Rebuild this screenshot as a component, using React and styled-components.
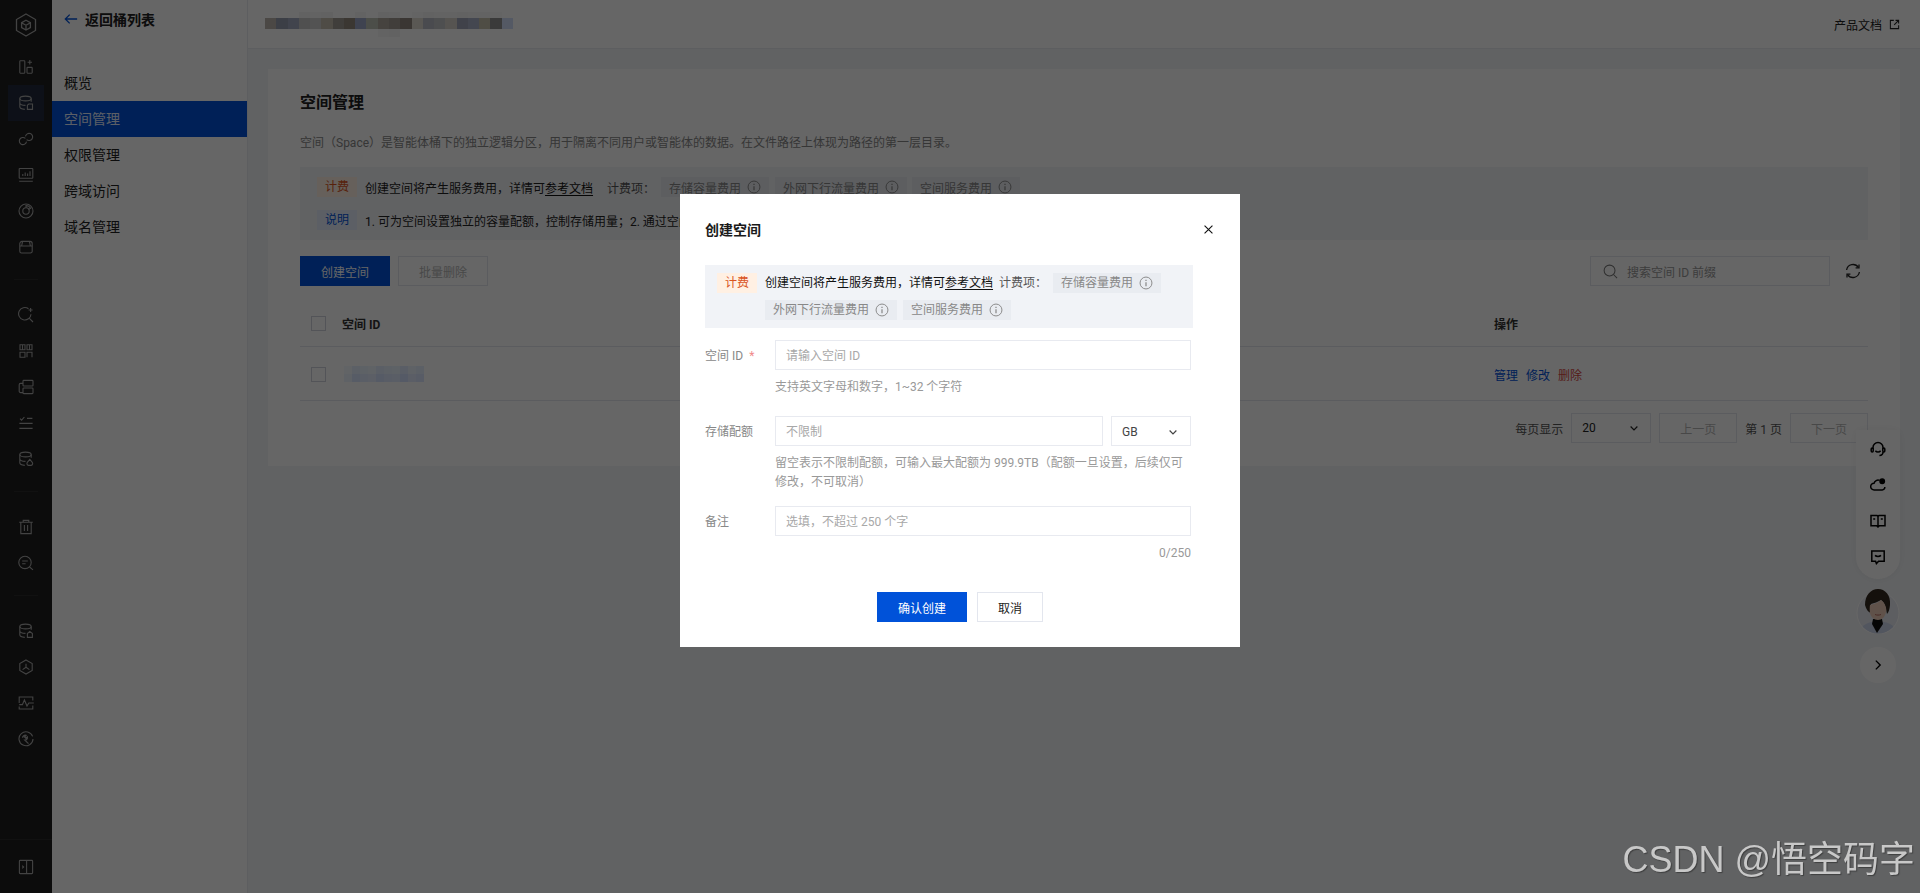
import React from 'react';
import styled, { createGlobalStyle } from 'styled-components';

const GlobalStyle = createGlobalStyle`
  html, body {
    margin: 0;
    height: 100%;
    overflow: hidden;
    background: #f3f4f7;
    font-family: Roboto, "Noto Sans CJK SC", sans-serif;
    font-size: 12px;
    color: #222;
  }
  * {
    box-sizing: border-box;
  }
`;

// the mosaics were sampled through the dark mask, so lift them back up
const undim = (hex) =>
  '#' +
  hex
    .match(/\w\w/g)
    .map((v) => Math.min(255, Math.round(parseInt(v, 16) * 2.5)).toString(16).padStart(2, '0'))
    .join('');

const Page = styled.div`
  display: flex;
  height: 100vh;
  overflow: hidden;
`;

const Rail = styled.nav`
  flex: 0 0 52px;
  display: flex;
  flex-direction: column;
  background: #1e1e1e;
  color: #a8a8a8;
`;

const RailLogo = styled.div`
  height: 49px;
  display: flex;
  align-items: center;
  justify-content: center;
`;

const RailItem = styled.div`
  height: 36px;
  margin: 0 8px;
  display: flex;
  align-items: center;
  justify-content: center;
  background: ${(p) => (p.$active ? '#212a3c' : 'transparent')};
`;

const RailDivider = styled.div`
  height: 1px;
  margin: 14px 14px 17px;
  background: #2c2c2c;
`;

const RailFooter = styled.div`
  margin-top: auto;
  height: 54px;
  border-top: 1px solid #2c2c2c;
  display: flex;
  align-items: center;
  justify-content: center;
`;

const Glyph = styled.svg.attrs((p) => ({ viewBox: p.$box || '0 0 16 16' }))`
  width: ${(p) => p.$size || 16}px;
  height: ${(p) => p.$size || 16}px;
  fill: none;
  stroke: currentColor;
  stroke-width: ${(p) => p.$weight || 1.1};
  flex: none;
`;

const Sidebar = styled.aside`
  flex: 0 0 196px;
  background: #fff;
  border-right: 1px solid #e8eaf0;
`;

const BackLink = styled.div`
  height: 38px;
  padding-left: 12px;
  display: flex;
  align-items: center;
  gap: 7px;
  font-size: 14px;
  font-weight: 700;
  color: #222;
  svg {
    color: #0052d9;
  }
`;

const Menu = styled.div`
  margin-top: 27px;
`;

const MenuItem = styled.div`
  height: 36px;
  line-height: 36px;
  padding-left: 12px;
  font-size: 14px;
  background: ${(p) => (p.$active ? '#0052d9' : 'transparent')};
  color: ${(p) => (p.$active ? '#e4edff' : '#222')};
`;

const Main = styled.main`
  flex: 1;
  min-width: 0;
  display: flex;
  flex-direction: column;
`;

const TopBar = styled.header`
  height: 49px;
  flex: none;
  background: #fff;
  border-bottom: 1px solid #e8eaf0;
  padding: 0 20px 0 17px;
  display: flex;
  align-items: center;
  justify-content: space-between;
`;

const DocLink = styled.div`
  display: flex;
  align-items: center;
  gap: 7px;
  color: #222;
`;

const Content = styled.div`
  flex: 1;
  padding: 20px;
`;

const Card = styled.section`
  height: 397px;
  background: #fff;
  padding: 22px 32px 0;
`;

const Title = styled.h2`
  margin: 0;
  font-size: 16px;
  line-height: 24px;
  font-weight: 700;
  color: #222;
`;

const Intro = styled.p`
  margin: 19px 0 15px;
  line-height: 18px;
  color: #888;
`;

const Notice = styled.div`
  height: 73px;
  background: #f3f4f7;
  padding: 10px 17px;
  display: flex;
  flex-direction: column;
  gap: 13px;
`;

const NoticeRow = styled.div`
  display: flex;
  align-items: center;
  height: 20px;
  white-space: nowrap;
`;

const Tag = styled.span`
  flex: none;
  width: 40px;
  height: 20px;
  line-height: 20px;
  text-align: center;
  margin-right: 8px;
  color: ${(p) => (p.$blue ? '#0052d9' : '#d9541e')};
  background: ${(p) => (p.$blue ? '#e6eefc' : '#fff0e3')};
`;

const DocAnchor = styled.span`
  color: #111;
  text-decoration: underline;
  text-underline-offset: 2px;
`;

const FeeLabel = styled.span`
  margin: 0 6px 0 ${(p) => p.$left}px;
  color: #555;
`;

const Chip = styled.span`
  display: inline-flex;
  align-items: center;
  gap: 6px;
  height: 20px;
  padding: 0 8px;
  color: #888;
  background: #e9ecf1;
  margin-right: ${(p) => (p.$gap ? `${p.$gap}px` : 0)};
`;

const Toolbar = styled.div`
  margin-top: 16px;
  display: flex;
  align-items: center;
  gap: 8px;
`;

const Button = styled.button`
  height: 30px;
  width: ${(p) => p.$width || 90}px;
  padding: 0;
  font: inherit;
  font-size: 12px;
  border: 1px solid ${(p) => (p.$primary ? '#0052d9' : '#e3e6ee')};
  background: ${(p) => (p.$primary ? '#0052d9' : '#fff')};
  color: ${(p) => (p.$primary ? '#fff' : p.$muted ? '#b5b5b5' : '#222')};
`;

const ToolbarEnd = styled.div`
  margin-left: auto;
  padding-right: 7px;
  display: flex;
  align-items: center;
  gap: 15px;
  color: #222;
`;

const SearchBox = styled.div`
  width: 240px;
  height: 30px;
  border: 1px solid #e3e6ee;
  display: flex;
  align-items: center;
  gap: 9px;
  padding-left: 12px;
  color: #999;
  svg {
    color: #777;
  }
`;

const TableRow = styled.div`
  display: flex;
  align-items: center;
  height: ${(p) => (p.$head ? 48 : 54)}px;
  margin-top: ${(p) => (p.$head ? 13 : 0)}px;
  padding: 1px 0 0 11px;
  border-bottom: 1px solid #e3e6ee;
`;

const Checkbox = styled.span`
  width: 15px;
  height: 15px;
  border: 1px solid #cfd3dc;
  background: #fff;
  margin-right: 16px;
  flex: none;
`;

const IdCell = styled.div`
  flex: 1;
  display: flex;
  padding-left: ${(p) => (p.$head ? 0 : 2)}px;
  font-weight: ${(p) => (p.$head ? 700 : 400)};
  color: #333;
`;

const ActionCell = styled.div`
  flex: 0 0 374px;
  display: flex;
  gap: 8px;
  font-weight: ${(p) => (p.$head ? 700 : 400)};
  color: #333;
`;

const ActionLink = styled.span`
  color: ${(p) => (p.$danger ? '#d54941' : '#0052d9')};
`;

const Pager = styled.div`
  margin-top: 12px;
  display: flex;
  justify-content: flex-end;
  align-items: center;
  gap: 8px;
  color: #555;
`;

const PagerSelect = styled.div`
  width: 80px;
  height: 30px;
  border: 1px solid #e3e6ee;
  padding: 0 10px;
  display: flex;
  align-items: center;
  justify-content: space-between;
  color: #222;
`;

const FloatDock = styled.aside`
  position: fixed;
  right: 20px;
  top: 430px;
  display: flex;
  flex-direction: column;
  align-items: center;
`;

const DockPill = styled.div`
  width: 44px;
  height: 149px;
  border-radius: 0 0 22px 22px;
  background: #fff;
  box-shadow: 0 0 12px rgba(0, 0, 0, 0.06);
  padding-top: 1px;
  display: flex;
  flex-direction: column;
  align-items: center;
  color: #000;
`;

const DockIcon = styled.div`
  height: 36px;
  display: flex;
  align-items: center;
  justify-content: center;
`;

const AvatarWrap = styled.div`
  margin-top: 9px;
  height: 46px;
`;

const DockToggle = styled.div`
  margin-top: 13px;
  width: 36px;
  height: 36px;
  border-radius: 50%;
  background: #fff;
  color: #000;
  display: flex;
  align-items: center;
  justify-content: center;
`;

const Mask = styled.div`
  position: fixed;
  inset: 0;
  background: rgba(0, 0, 0, 0.6);
`;

const Dialog = styled.div`
  position: absolute;
  left: 680px;
  top: 194px;
  width: 560px;
  height: 453px;
  background: #fff;
  padding: 26px 49px 25px 25px;
  font-size: 12px;
`;

const DialogTitle = styled.h3`
  margin: 0 0 25px;
  font-size: 14px;
  line-height: 20px;
  font-weight: 700;
  color: #1a1a1a;
`;

const CloseButton = styled.span`
  position: absolute;
  right: 27px;
  top: 31px;
  display: flex;
  color: #111;
`;

const DialogNotice = styled.div`
  height: 63px;
  margin-right: -2px;
  padding: 8px 12px;
  background: #f1f3f7;
  display: flex;
  align-items: flex-start;
`;

const DialogNoticeBody = styled.div`
  flex: 1;
  display: flex;
  flex-wrap: wrap;
  align-items: center;
  row-gap: 7px;
  line-height: 20px;
  color: #111;
`;

const Field = styled.div`
  display: grid;
  grid-template-columns: 70px 1fr;
  margin-top: ${(p) => p.$top}px;
`;

const FieldLabel = styled.label`
  line-height: 32px;
  height: 30px;
  color: #888;
`;

const Required = styled.span`
  margin-left: 6px;
  color: #f08a8a;
`;

const InputRow = styled.div`
  display: flex;
  gap: 8px;
`;

const TextInput = styled.input`
  flex: 1;
  min-width: 0;
  width: 100%;
  height: 30px;
  border: 1px solid #e8eaf0;
  padding: 1px 10px 0;
  font: inherit;
  outline: none;
  &::placeholder {
    color: #a8a8a8;
    opacity: 1;
  }
`;

const UnitSelect = styled.div`
  flex: 0 0 80px;
  height: 30px;
  border: 1px solid #e8eaf0;
  padding: 1px 11px 0 10px;
  display: flex;
  align-items: center;
  justify-content: space-between;
  color: #444;
`;

const Hint = styled.div`
  grid-column: 2;
  margin-top: 8px;
  line-height: 19px;
  color: #999;
`;

const Counter = styled(Hint)`
  text-align: right;
`;

const DialogActions = styled.div`
  margin-top: 29px;
  margin-left: 24px;
  display: flex;
  justify-content: center;
  gap: 10px;
`;

const Watermark = styled.div`
  position: fixed;
  right: 5px;
  top: 837px;
  font-family: "Liberation Sans", "Noto Sans CJK SC", sans-serif;
  font-size: 36px;
  line-height: 46px;
  white-space: nowrap;
  color: #c8c8c8;
  text-shadow: 1px 1px 1px rgba(40, 40, 40, 0.6);
`;

const InfoIcon = () => (
  <Glyph $size={14}>
    <circle cx="8" cy="8" r="6.8" />
    <path d="M8 7v4.8M8 4.2v1.4" strokeWidth="1.4" />
  </Glyph>
);

const Chevron = ({ size = 12 }) => (
  <Glyph $size={size} $weight={1.6}>
    <path d="M3.5 6l4.5 4.5L12.5 6" />
  </Glyph>
);

const DB_BODY = 'M1.8 3.5v8.3c0 1.4 2.4 2.4 5 2.6M13.2 3.5v3.3M1.8 7.8c0 1.4 2.6 2.6 5.7 2.6';

const railGroups = [
  [
    <>
      <rect x="1.8" y="1.8" width="5" height="12.4" rx="0.6" />
      <rect x="9" y="8.4" width="5.2" height="5.8" rx="0.6" />
      <path d="M11.8 1v4.4M9.6 3.2H14" />
    </>,
    <>
      <ellipse cx="7.5" cy="3.5" rx="5.7" ry="2.4" />
      <path d={DB_BODY} />
      <path d="M9.4 14.4V10.2l1.4-1.2h3.7v5.4z" />
    </>,
    <path d="M7.4 7.4A3.6 3.6 0 1 0 8.5 10.6M8.6 8.6A3.6 3.6 0 1 0 7.5 5.4" />,
    <>
      <rect x="1.2" y="1.5" width="13.6" height="9.8" rx="0.6" />
      <path d="M4.8 9V7M7.2 9V5.5M9.6 9V6.5M12 9V4.2M1.2 14.2h13.6" />
    </>,
    <>
      <circle cx="8" cy="8" r="7" />
      <circle cx="8" cy="8" r="3.2" />
      <path d="M8 4.8V2.6c1.8 0 3.6 1 4.6 2.7L10.4 6.4" />
    </>,
    <>
      <path d="M4 2.4h8a2.2 2.2 0 0 1 2.2 2.2v7.6a1.8 1.8 0 0 1-1.8 1.8H3.6a1.8 1.8 0 0 1-1.8-1.8V4.6A2.2 2.2 0 0 1 4 2.4z" />
      <path d="M1.8 7h12.4M4.6 2.4L3.6 7M11.4 2.4l1 4.6" />
    </>,
  ],
  [
    <>
      <path d="M10.5 1.8A6.2 6.2 0 1 0 13 7.2M11.4 11.4l3.6 3.6" />
      <path d="M12.6 1v4M10.6 3h4" />
    </>,
    <>
      <path d="M2 1.8h5v5H2zM9 1.8h5v5H9zM2 9.2h5v5H2zM9 14.2V9.2h5v5M4.5 1.8v5M11.5 1.8v5" />
    </>,
    <>
      <rect x="5" y="1.4" width="10" height="5.6" rx="0.8" />
      <rect x="5" y="9" width="10" height="5.6" rx="0.8" />
      <path d="M5 4.4H2.6A1.4 1.4 0 0 0 1.2 5.8v6.4a1.4 1.4 0 0 0 1.4 1.4H5" />
    </>,
    <path d="M2 3.6l1.6 1.6L6.4 2M9 3.4h5.4M1.4 8.4h13.2M1.4 13.4h13.2" />,
    <>
      <ellipse cx="7.5" cy="3.5" rx="5.7" ry="2.4" />
      <path d={DB_BODY} />
      <path d="M11.8 8.4l2.5 3a1.9 1.9 0 0 1-1.2 3h-2.6a1.9 1.9 0 0 1-1.2-3z" />
    </>,
  ],
  [
    <>
      <path d="M1.2 3.2h13.6M5.2 3.2V1.4h5.6v1.8M2.8 3.2v11.4h10.4V3.2M6.4 6v6M9.6 6v6" />
    </>,
    <>
      <circle cx="7" cy="7.4" r="6.2" />
      <path d="M4.2 6h5.6M4.2 8.8h3.4M11.6 12l3.4 2.8" />
    </>,
  ],
  [
    <>
      <ellipse cx="7.5" cy="3.5" rx="5.7" ry="2.4" />
      <path d={DB_BODY} />
      <path d="M9.4 14.4V10.6L11.8 8.4l2.6 2.2v3.8z" />
    </>,
    <>
      <path d="M8 .9l6.2 3.6v7L8 15.1l-6.2-3.6v-7z" />
      <path d="M8 4.8V8.2M8 8.2l-3.4 2.4M8 8.2l3.4 2.4" />
    </>,
    <>
      <path d="M1.2 8V2h13.6v3.4M14.8 10.6V14H1.2v-2.6" />
      <path d="M1.2 9.6h3.2l2-4.6 2.6 6 1.8-3h5" />
    </>,
    <>
      <path d="M14.6 5.4A7 7 0 1 0 15 8" />
      <path d="M4.6 6.8A2.6 2.6 0 0 1 8 4.4L6.6 6l1.2 1.2 1.5-1.3a2.6 2.6 0 0 1-2.4 3.3l3.6 3.4" strokeWidth="1.3" />
    </>,
  ],
];

const TOP_MOSAIC = [
  ['666666', '666666', '666666', '626262', '636363', '626262', '666666', '666666', '636363', '666666', '626262', '636363', '666666', '646464', '626262', '636363', '636363', '626262', '636363', '636363', '646464', '666666'],
  ['4b4845', '3c3f46', '41444d', '505050', '535353', '4f4c46', '403e3b', '3b3732', '3f4350', '4c4e49', '46433f', '413e3b', '3a3633', '5a5854', '4a4b4f', '4e4f50', '565451', '40424a', '444750', '4f4d45', '3a3a3a', '545964'],
  ['666666', '666666', '666666', '666666', '666666', '666666', '666666', '666666', '666666', '666666', '636363', '626262', '666666', '666666', '666666', '666666', '666666', '666666', '666666', '666666', '666666', '666666'],
];

const ROW_MOSAIC = [
  ['626469', '5c6068', '5e626a', '60636a', '5b5f68', '5d6169', '5e6268', '5a5e68', '5f6269', '5c6069'],
  ['5f6269', '575c67', '5a5e68', '5c5f67', '565b66', '595d67', '5a5e66', '555a66', '5b5e66', '585c67'],
];

const Mosaic = ({ rows, cell, heights }) => {
  const width = rows[0].length * cell;
  const tops = heights.map((_, i) => heights.slice(0, i).reduce((a, b) => a + b, 0));
  return (
    <svg width={width} height={heights.reduce((a, b) => a + b, 0)} shapeRendering="crispEdges">
      {rows.map((row, y) =>
        row.map((c, x) => (
          <rect key={`${x}-${y}`} x={x * cell} y={tops[y]} width={cell} height={heights[y]} fill={undim(c)} />
        )),
      )}
    </svg>
  );
};

const Avatar = () => (
  <svg width="44" height="46" viewBox="0 0 44 46">
    <defs>
      <clipPath id="bust">
        <circle cx="22" cy="25" r="20.5" />
      </clipPath>
    </defs>
    <circle cx="22" cy="25" r="21" fill="#e8ebf2" stroke="#fff" />
    <g clipPath="url(#bust)">
      <path d="M3 46c1-8 7-11 13-12h12c6 1 12 4 13 12z" fill="#cdd6ee" />
      <path d="M17 31h9l1 5-6 9-5-9z" fill="#111" />
    </g>
    <path d="M9 17C9 7 15 1 22 1s13 6 12 16c-.3 3-1 7-3 9-1-6-2-11-6-14-3 2-7 3-10 4-1 3-1 6 0 9-3-1-5-4-6-8z" fill="#33291f" />
    <path d="M14 17c4-1 8-2 11-5 4 3 6 8 5 12-1 5-4 8-8 8s-7-3-8-7c-.4-3-.4-5 0-8z" fill="#f0cdb8" />
    <path d="M19 26.5c2 .8 4 .8 6 0" stroke="#b56a5e" strokeWidth="1" fill="none" />
  </svg>
);

const App = () => (
  <Page>
    <GlobalStyle />
    <Rail>
      <RailLogo>
        <Glyph $box="0 0 21 24" $size={24} $weight={1.3}>
          <path d="M10.5 1L20 6.5v11L10.5 23 1 17.5v-11z" />
          <path d="M10.5 7.2l4.4 2.5v4.8l-4.4 2.5-4.4-2.5V9.7zM6.1 9.7l4.4 2.5 4.4-2.5M10.5 12.2v4.8" />
        </Glyph>
      </RailLogo>
      {railGroups.map((group, g) => (
        <React.Fragment key={g}>
          {g > 0 && <RailDivider />}
          {group.map((icon, i) => (
            <RailItem key={i} $active={g === 0 && i === 1}>
              <Glyph>{icon}</Glyph>
            </RailItem>
          ))}
        </React.Fragment>
      ))}
      <RailFooter>
        <Glyph>
          <rect x="1.4" y="1.4" width="13.2" height="13.2" rx="0.8" />
          <path d="M8.6 1.4v13.2M4.2 6.6L5.6 8 4.2 9.4" />
        </Glyph>
      </RailFooter>
    </Rail>

    <Sidebar>
      <BackLink>
        <Glyph $size={14} $weight={1.5}>
          <path d="M15 8H1.5M6.5 3l-5 5 5 5" />
        </Glyph>
        返回桶列表
      </BackLink>
      <Menu>
        <MenuItem>概览</MenuItem>
        <MenuItem $active>空间管理</MenuItem>
        <MenuItem>权限管理</MenuItem>
        <MenuItem>跨域访问</MenuItem>
        <MenuItem>域名管理</MenuItem>
      </Menu>
    </Sidebar>

    <Main>
      <TopBar>
        <Mosaic rows={TOP_MOSAIC} cell={11.27} heights={[6, 11, 8]} />
        <DocLink>
          产品文档
          <Glyph $size={11} $weight={1.5}>
            <path d="M7 2H2v12h12V9M9.5 2H14v4.5M14 2L7.5 8.5" />
          </Glyph>
        </DocLink>
      </TopBar>
      <Content>
        <Card>
          <Title>空间管理</Title>
          <Intro>空间（Space）是智能体桶下的独立逻辑分区，用于隔离不同用户或智能体的数据。在文件路径上体现为路径的第一层目录。</Intro>
          <Notice>
            <NoticeRow>
              <Tag>计费</Tag>
              <span>
                创建空间将产生服务费用，详情可<DocAnchor>参考文档</DocAnchor>
              </span>
              <FeeLabel $left={14}>计费项：</FeeLabel>
              <Chip $gap={6}>存储容量费用 <InfoIcon /></Chip>
              <Chip $gap={5}>外网下行流量费用 <InfoIcon /></Chip>
              <Chip>空间服务费用 <InfoIcon /></Chip>
            </NoticeRow>
            <NoticeRow>
              <Tag $blue>说明</Tag>
              <span>1. 可为空间设置独立的容量配额，控制存储用量；2. 通过空间隔离不同用户的数据。</span>
            </NoticeRow>
          </Notice>
          <Toolbar>
            <Button $primary>创建空间</Button>
            <Button $muted>批量删除</Button>
            <ToolbarEnd>
              <SearchBox>
                <Glyph $size={15}>
                  <circle cx="7" cy="7" r="5.8" />
                  <path d="M11.2 11.2L15 15" />
                </Glyph>
                搜索空间 ID 前缀
              </SearchBox>
              <Glyph $weight={1.3}>
                <path d="M1.6 7A6.5 6.5 0 0 1 13.4 4.4M14.4 9a6.5 6.5 0 0 1-11.8 2.6" />
                <path d="M14 1.4v3.4h-3.4M2 14.6v-3.4h3.4" />
              </Glyph>
            </ToolbarEnd>
          </Toolbar>
          <TableRow $head>
            <Checkbox />
            <IdCell $head>空间 ID</IdCell>
            <ActionCell $head>操作</ActionCell>
          </TableRow>
          <TableRow>
            <Checkbox />
            <IdCell>
              <Mosaic rows={ROW_MOSAIC} cell={8} heights={[8, 8]} />
            </IdCell>
            <ActionCell>
              <ActionLink>管理</ActionLink>
              <ActionLink>修改</ActionLink>
              <ActionLink $danger>删除</ActionLink>
            </ActionCell>
          </TableRow>
          <Pager>
            每页显示
            <PagerSelect>
              20
              <Chevron />
            </PagerSelect>
            <Button $width={78} $muted>上一页</Button>
            第 1 页
            <Button $width={78} $muted>下一页</Button>
          </Pager>
        </Card>
      </Content>
    </Main>

    <FloatDock>
      <DockPill>
        <DockIcon>
          <Glyph $weight={1.5}>
            <path d="M3 8V6.6a5 5 0 0 1 10 0V8M5.4 9.8c1.2 1.6 4 1.6 5.2 0M13 11c0 2-1.4 3.4-3.6 3.4" />
            <rect x="1.2" y="7" width="2" height="4" rx="1" />
            <rect x="12.8" y="7" width="2" height="4" rx="1" />
          </Glyph>
        </DockIcon>
        <DockIcon>
          <Glyph $weight={1.5}>
            <path d="M9.6 3.4A4.2 4.2 0 0 0 4 6.2 3.4 3.4 0 0 0 4.2 13h8a2.7 2.7 0 0 0 2.6-3" />
            <circle cx="12.2" cy="4.2" r="2.2" fill="currentColor" />
          </Glyph>
        </DockIcon>
        <DockIcon>
          <Glyph $weight={1.5}>
            <path d="M1 2.4h6L8 3.4l1-1h6v10.4H9.4L8 14l-1.4-1.2H1zM8 3.4v9.4M3.2 6h2M10.8 6h2" />
          </Glyph>
        </DockIcon>
        <DockIcon>
          <Glyph $weight={1.5}>
            <path d="M1.8 2h12.4v10.2H8.6L6.4 14.6l-.8-2.4H1.8zM5 6.4c1.4 1.3 4.6 1.3 6 0" />
          </Glyph>
        </DockIcon>
      </DockPill>
      <AvatarWrap>
        <Avatar />
      </AvatarWrap>
      <DockToggle>
        <Glyph $size={14} $weight={1.6}>
          <path d="M5.5 3l5 5-5 5" />
        </Glyph>
      </DockToggle>
    </FloatDock>

    <Mask>
      <Dialog>
        <DialogTitle>创建空间</DialogTitle>
        <CloseButton>
          <Glyph $size={9} $weight={2}>
            <path d="M1 1l14 14M15 1L1 15" />
          </Glyph>
        </CloseButton>
        <DialogNotice>
          <Tag>计费</Tag>
          <DialogNoticeBody>
            <span>
              创建空间将产生服务费用，详情可<DocAnchor>参考文档</DocAnchor>
            </span>
            <FeeLabel $left={6}>计费项：</FeeLabel>
            <Chip>存储容量费用 <InfoIcon /></Chip>
            <Chip $gap={6}>外网下行流量费用 <InfoIcon /></Chip>
            <Chip>空间服务费用 <InfoIcon /></Chip>
          </DialogNoticeBody>
        </DialogNotice>
        <Field $top={12}>
          <FieldLabel>
            空间 ID<Required>*</Required>
          </FieldLabel>
          <TextInput placeholder="请输入空间 ID" />
          <Hint>支持英文字母和数字，1~32 个字符</Hint>
        </Field>
        <Field $top={19}>
          <FieldLabel>存储配额</FieldLabel>
          <InputRow>
            <TextInput placeholder="不限制" />
            <UnitSelect>
              GB
              <Chevron />
            </UnitSelect>
          </InputRow>
          <Hint>留空表示不限制配额，可输入最大配额为 999.9TB（配额一旦设置，后续仅可修改，不可取消）</Hint>
        </Field>
        <Field $top={14}>
          <FieldLabel>备注</FieldLabel>
          <TextInput placeholder="选填，不超过 250 个字" />
          <Counter>0/250</Counter>
        </Field>
        <DialogActions>
          <Button $primary>确认创建</Button>
          <Button $width={66}>取消</Button>
        </DialogActions>
      </Dialog>
    </Mask>

    <Watermark>CSDN @悟空码字</Watermark>
  </Page>
);

export default App;
